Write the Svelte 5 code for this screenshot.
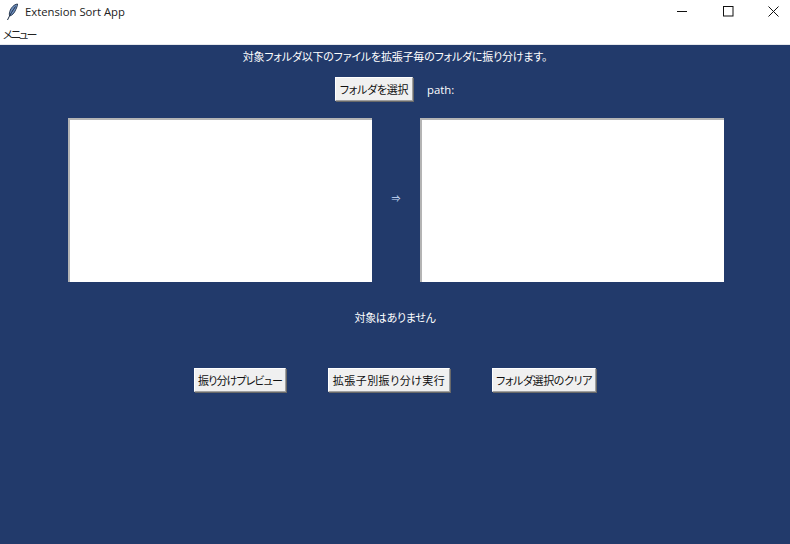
<script lang="ts">
  const actions = [
    { label: '振り分けプレビュー', width: 92, spacing: -0.9 },
    { label: '拡張子別振り分け実行', width: 122, spacing: 0.45 },
    { label: 'フォルダ選択のクリア', width: 104, spacing: -0.4 },
  ];
</script>

<div class="window">
  <header class="titlebar">
    <svg class="feather" width="14" height="18" viewBox="0 0 14 18" aria-hidden="true">
      <path d="M12.500 1 C9 1.500 6 4.500 4.800 8.500 C4.200 10.500 4.200 12 4.700 13 C7 12.500 9.500 10 10.800 6.500 C11.800 4.500 12.600 2.500 12.500 1 Z" fill="#6f90c0" stroke="#1c2c44" stroke-width="0.9" />
      <path d="M10.500 3.500 C8 7 5 11.500 2.500 17" fill="none" stroke="#1c2c44" stroke-width="1" />
    </svg>
    <span class="app-name">Extension Sort App</span>
    <div class="window-controls">
      <svg class="min" width="11" height="11" viewBox="0 0 11 11" aria-hidden="true"><path d="M0 5.500H10" stroke="#111" fill="none" /></svg>
      <svg width="11" height="11" viewBox="0 0 11 11" aria-hidden="true"><rect x="0.500" y="0.500" width="9.500" height="9.500" stroke="#111" fill="none" /></svg>
      <svg width="11" height="11" viewBox="0 0 11 11" aria-hidden="true"><path d="M0.500 0.500L10.500 10.500M10.500 0.500L0.500 10.500" stroke="#111" fill="none" /></svg>
    </div>
  </header>
  <nav class="menubar"><span>メニュー</span></nav>

  <main class="content">
    <p class="lead">対象フォルダ以下のファイルを拡張子毎のフォルダに振り分けます。</p>

    <div class="picker">
      <button type="button" class="btn pick">フォルダを選択</button>
      <span class="path">path:</span>
    </div>

    <div class="lists">
      <div class="listbox"></div>
      <span class="arrow">⇒</span>
      <div class="listbox"></div>
    </div>

    <p class="status">対象はありません</p>

    <div class="actions">
      {#each actions as action (action.label)}
        <button type="button" class="btn" style={`width:${action.width}px;letter-spacing:${action.spacing}px`}>{action.label}</button>
      {/each}
    </div>
  </main>
</div>

<style>
  :global(body) {
    margin: 0;
    background: #223a6b;
  }

  .window {
    width: 790px;
    height: 544px;
    overflow: hidden;
    display: flex;
    flex-direction: column;
    font-family: "Noto Sans CJK JP", "Noto Sans", sans-serif;
    font-size: 11px;
    font-feature-settings: "palt";
    color: #fff;
    background: #223a6b;
  }

  .titlebar {
    flex: none;
    height: 23px;
    display: flex;
    align-items: center;
    background: #fff;
    color: #222;
  }

  .feather {
    margin-left: 5px;
  }

  .app-name {
    margin-left: 6px;
    font-family: "Open Sans", "Noto Sans", sans-serif;
    font-size: 11.3px;
  }

  .window-controls {
    margin-left: auto;
    margin-right: 11px;
    display: flex;
    gap: 34px;
  }

  .min {
    margin-right: 1px;
  }

  .menubar {
    flex: none;
    box-sizing: border-box;
    height: 22px;
    line-height: 22px;
    padding-left: 3px;
    letter-spacing: -1.800px;
    background: #fff;
    border-bottom: 1px solid #e6e8ec;
    color: #222;
  }

  .content {
    flex: 1;
    display: flex;
    flex-direction: column;
    align-items: center;
  }

  .lead {
    margin: 3px 0 0;
    height: 17px;
    line-height: 17px;
    letter-spacing: -0.200px;
  }

  .picker {
    margin-top: 12px;
    display: flex;
    align-items: center;
    gap: 14px;
    align-self: flex-start;
    padding-left: 335px;
  }

  .path {
    font-family: "Open Sans", "Noto Sans", sans-serif;
    font-size: 11.300px;
  }

  .btn {
    box-sizing: border-box;
    height: 24px;
    padding: 0;
    font: inherit;
    font-feature-settings: "palt";
    white-space: nowrap;
    color: #111;
    background: #f0f0f0;
    border: 1px solid;
    border-color: #fff #a0a0a0 #a0a0a0 #fff;
    box-shadow: 1px 1px 0 #696969;
  }

  .pick {
    width: 78px;
    letter-spacing: -0.300px;
  }

  .lists {
    margin-top: 17px;
    align-self: flex-start;
    padding-left: 68px;
    display: flex;
    align-items: center;
  }

  .listbox {
    box-sizing: border-box;
    width: 304px;
    height: 164px;
    background: #fff;
    border-top: 2px solid #b4b4b4;
    border-left: 2px solid #b4b4b4;
  }

  .arrow {
    width: 48px;
    margin-bottom: 3px;
    text-align: center;
    font-family: "Noto Sans CJK JP", sans-serif;
    font-size: 9px;
    color: #cfe0ff;
  }

  .status {
    margin: 27px 0 0;
    height: 17px;
    line-height: 17px;
    letter-spacing: -0.300px;
  }

  .actions {
    margin-top: 42px;
    align-self: flex-start;
    padding-left: 194px;
    display: flex;
    gap: 42px;
  }
</style>
